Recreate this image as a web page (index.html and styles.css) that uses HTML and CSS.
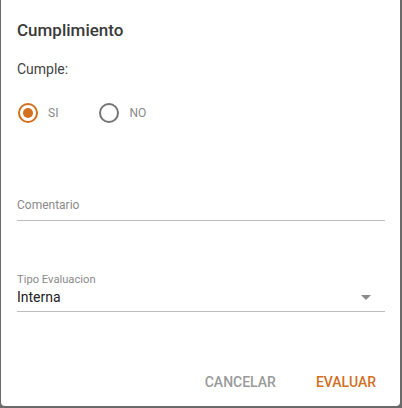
FILE: index.html
```html
<!DOCTYPE html>
<html>
<head>
<meta charset="utf-8">
<link rel="stylesheet" href="styles.css">
</head>
<body>
<div class="dialog">
  <h2 class="title">Cumplimiento</h2>
  <div class="question">Cumple:</div>
  <div class="radios">
    <label class="radio">
      <svg class="ring" width="20" height="20" viewBox="0 0 20 20"><circle cx="10" cy="10" r="9" fill="none" stroke="#d2701f" stroke-width="2"/><circle cx="10" cy="10" r="5" fill="#d2701f"/></svg>
      <span class="radio-label">SI</span>
    </label>
    <label class="radio">
      <svg class="ring" width="20" height="20" viewBox="0 0 20 20"><circle cx="10" cy="10" r="9" fill="none" stroke="#757575" stroke-width="2"/></svg>
      <span class="radio-label">NO</span>
    </label>
  </div>
  <div class="field comment">
    <div class="placeholder">Comentario</div>
  </div>
  <div class="field select">
    <div class="small-label">Tipo Evaluacion</div>
    <div class="select-row">
      <span class="value">Interna</span>
      <span class="arrow"></span>
    </div>
  </div>
  <div class="actions">
    <button class="btn cancel">CANCELAR</button>
    <button class="btn ok">EVALUAR</button>
  </div>
</div>
</body>
</html>
```
FILE: styles.css
```css
html, body {
  margin: 0;
  padding: 0;
}
body {
  background: #6a6a6a;
  width: 402px;
  height: 408px;
  overflow: hidden;
  font-family: Roboto, "Liberation Sans", sans-serif;
}
.dialog {
  box-sizing: border-box;
  margin-left: 1px;
  width: 399px;
  height: 406px;
  background: #fff;
  border-radius: 0 0 4px 4px;
  padding: 0 15px 0 16px;
  display: flex;
  flex-direction: column;
}
.title {
  margin: 20px 0 0 0;
  font-size: 17px;
  line-height: 21px;
  font-weight: 500;
  color: #3a3a3a;
}
.question {
  margin-top: 18px;
  font-size: 14px;
  line-height: 20px;
  color: #444;
}
.radios {
  margin-top: 24px;
  display: flex;
  align-items: center;
  height: 20px;
  padding-left: 1px;
}
.radio {
  display: flex;
  align-items: center;
  gap: 10px;
}
.radio + .radio {
  margin-left: 41px;
}
.ring {
  display: block;
}
.radio-label {
  font-size: 12px;
  color: #8a8a8a;
  line-height: 20px;
}
.field {
  border-bottom: 1px solid #bdbdbd;
}
.comment {
  margin-top: 74px;
  padding-bottom: 7px;
}
.placeholder {
  font-size: 12px;
  line-height: 16px;
  color: #8a8a8a;
}
.select {
  margin-top: 52px;
  padding-bottom: 4px;
}
.small-label {
  font-size: 11.2px;
  line-height: 14px;
  color: #8a8a8a;
}
.select-row {
  display: flex;
  align-items: center;
  justify-content: space-between;
  height: 20px;
}
.value {
  font-size: 14px;
  color: #222;
}
.arrow {
  width: 0;
  height: 0;
  border-left: 5px solid transparent;
  border-right: 5px solid transparent;
  border-top: 5px solid #8a8a8a;
  margin-right: 14px;
}
.actions {
  margin-top: 52px;
  display: flex;
  justify-content: flex-end;
  gap: 24px;
  margin-right: 1px;
}
.btn {
  background: none;
  border: none;
  padding: 0 8px;
  height: 36px;
  font-family: Roboto, "Liberation Sans", sans-serif;
  font-size: 14px;
  font-weight: 500;
  cursor: pointer;
}
.cancel {
  color: #9a9a9a;
}
.ok {
  color: #d2701f;
}
```
